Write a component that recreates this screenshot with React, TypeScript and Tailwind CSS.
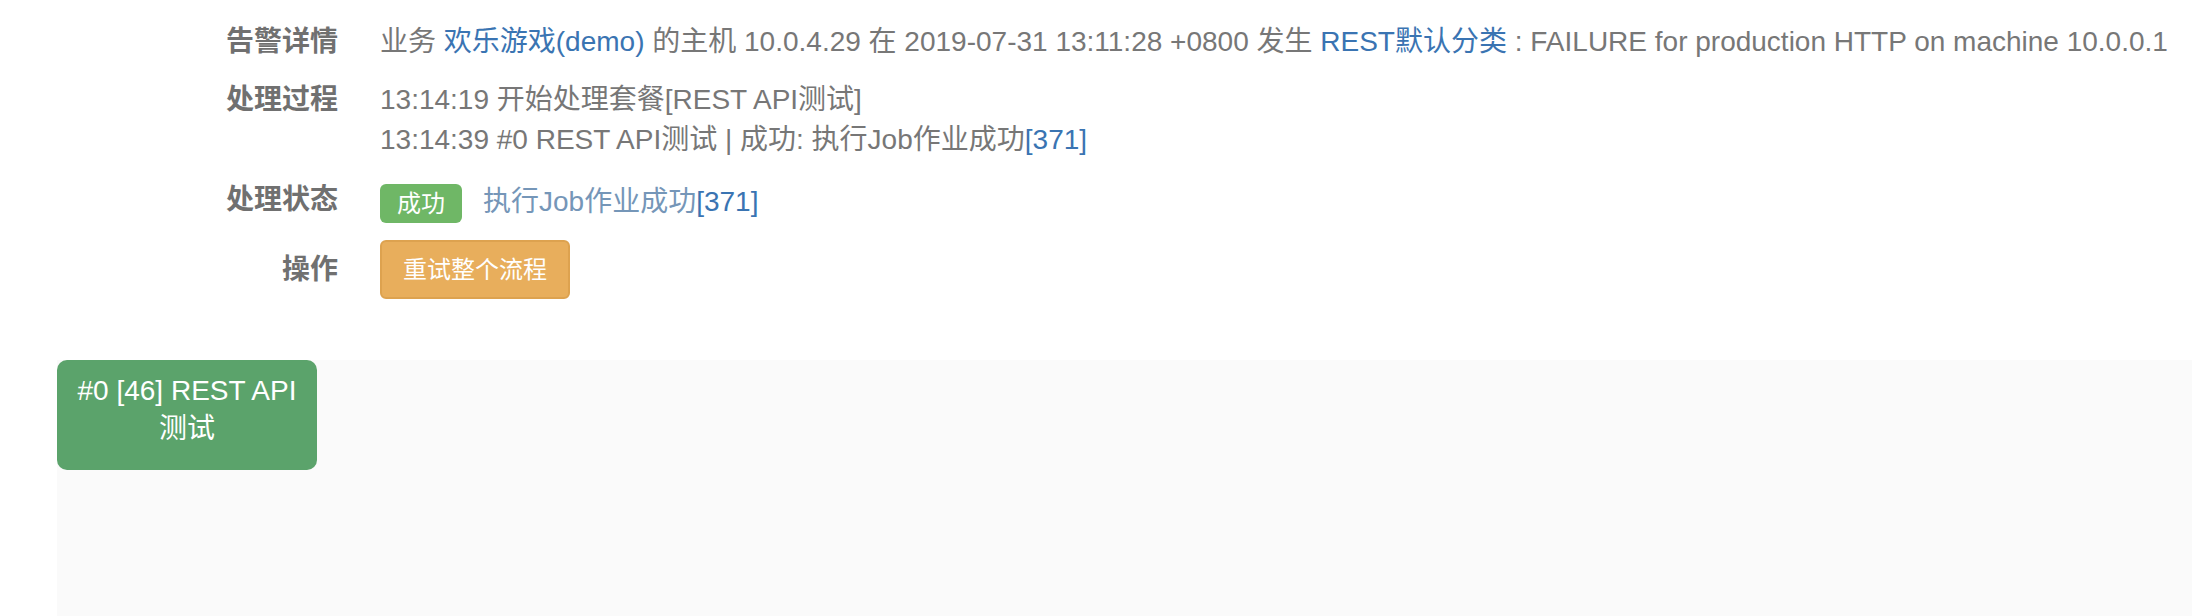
import React from 'react';

const FONT = '"Liberation Sans", "Noto Sans CJK SC", sans-serif';

interface RowProps {
  label: string;
  className?: string;
  children: React.ReactNode;
}

const Row: React.FC<RowProps> = ({ label, className = '', children }) => (
  <div className={`flex ${className}`}>
    <div className="w-[338px] shrink-0 text-right font-bold text-[#707070] leading-[40px]">
      {label}
    </div>
    <div className="ml-[42px] flex-1">{children}</div>
  </div>
);

const Link: React.FC<{ children: React.ReactNode }> = ({ children }) => (
  <span className="text-[#3a74b2]">{children}</span>
);

const App: React.FC = () => {
  return (
    <div
      className="w-[2192px] h-[616px] overflow-hidden bg-white text-[28px] text-[#777777]"
      style={{ fontFamily: FONT }}
    >
      <div className="pt-[22px]">
        <Row label="告警详情">
          <div className="leading-[40px] whitespace-nowrap">
            业务 <Link>欢乐游戏(demo)</Link> 的主机 10.0.4.29 在 2019-07-31 13:11:28 +0800 发生{' '}
            <Link>REST默认分类</Link> : FAILURE for production HTTP on machine 10.0.0.1
          </div>
        </Row>

        <Row label="处理过程" className="mt-[18px]">
          <div className="leading-[40px]">
            <div>13:14:19 开始处理套餐[REST API测试]</div>
            <div>
              13:14:39 #0 REST API测试 | 成功: 执行Job作业成功<Link>[371]</Link>
            </div>
          </div>
        </Row>

        <Row label="处理状态" className="mt-[20px] h-[43px]">
          <div className="flex items-start">
            <span className="mt-[4px] h-[39px] px-[17px] flex items-center rounded-[6px] bg-[#6fb766] text-white text-[24px]">
              成功
            </span>
            <span className="ml-[21px] mt-[2px] leading-[40px] text-[#7596b8]">
              执行Job作业成功<span className="text-[#3a74b2]">[371]</span>
            </span>
          </div>
        </Row>

        <Row label="操作" className="mt-[17px] items-center">
          <button className="h-[59px] px-[21px] rounded-[6px] border-2 border-[#dda24f] bg-[#e8ae5c] text-white text-[24px]">
            重试整个流程
          </button>
        </Row>
      </div>

      <div className="mt-[61px] ml-[57px] h-[300px] bg-[#fafafa]">
        <div className="w-[260px] h-[110px] rounded-[10px] bg-[#5ba36b] text-white text-center leading-[38px] pt-[12px] px-[14px]">
          #0 [46] REST API 测试
        </div>
      </div>
    </div>
  );
};

export default App;
